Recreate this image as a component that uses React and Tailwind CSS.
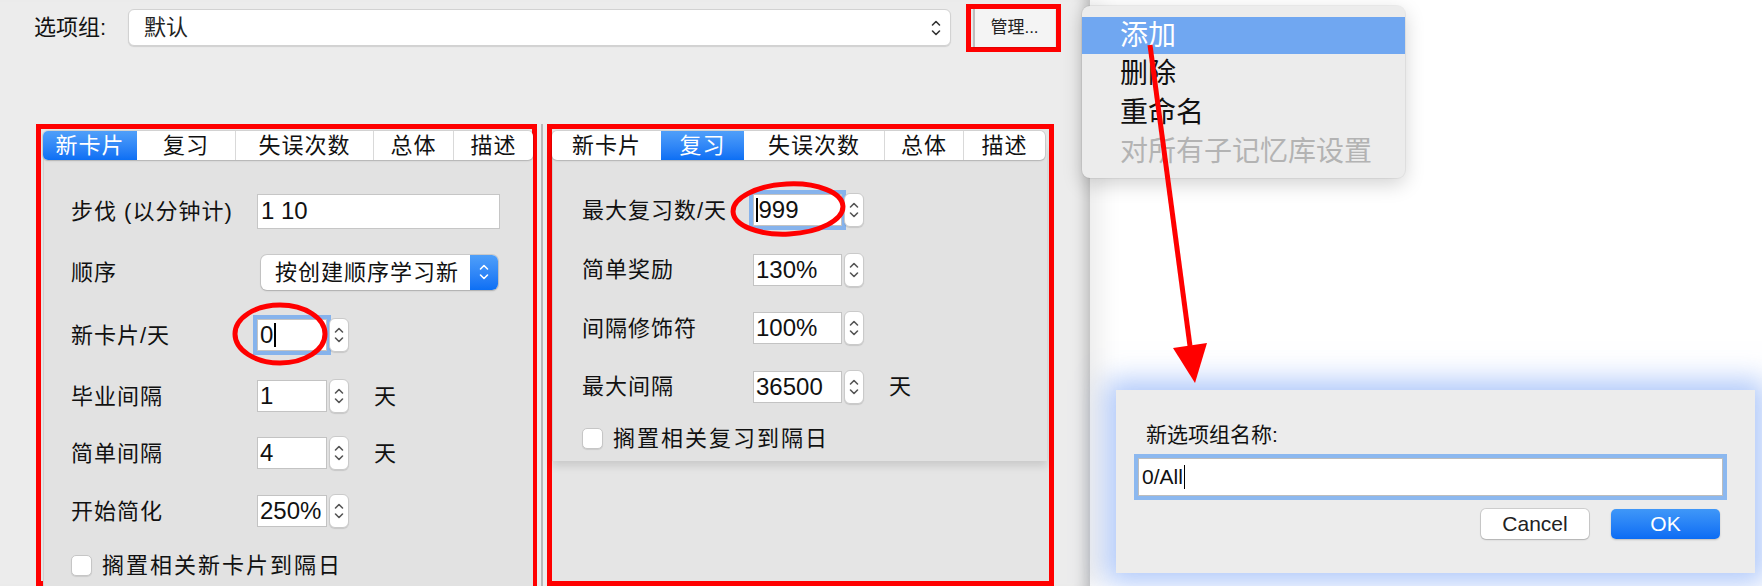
import React from "react";

const FONT = "font-['Liberation_Sans','Noto_Sans_CJK_SC',sans-serif]";

function UpDown({ color = "#4a4a4a", h = 24 }) {
  return (
    <svg width="12" height={h} viewBox="0 0 12 24" fill="none" stroke={color} strokeWidth="1.6" strokeLinecap="round" strokeLinejoin="round">
      <path d="M2.5 9 L6 5.5 L9.5 9" />
      <path d="M2.5 15 L6 18.5 L9.5 15" />
    </svg>
  );
}

function Stepper() {
  return (
    <div className="ml-[2px] flex h-[34px] w-[20px] items-center justify-center rounded-[6px] border border-[#cacaca] bg-white shadow-[0_1px_1px_rgba(0,0,0,0.12)]">
      <UpDown color="#555" />
    </div>
  );
}

function NumField({ value, w = "w-[70px]", focused, caretFirst, unit }) {
  return (
    <div className="flex items-center">
      <div
        className={`flex h-[32px] ${w} items-center border border-[#c3c3c3] bg-white pl-[2px] text-[24px] leading-none text-[#111] ${
          focused ? "shadow-[0_0_0_4px_#86b3ec]" : ""
        }`}
      >
        {caretFirst && <span className="mr-[1px] inline-block h-[24px] w-[1.5px] bg-black" />}
        <span>{value}</span>
        {focused && !caretFirst && <span className="ml-[1px] inline-block h-[24px] w-[1.5px] bg-black" />}
      </div>
      <Stepper />
      {unit && <span className="ml-[25px] text-[22px] text-[#111]">{unit}</span>}
    </div>
  );
}

function Checkbox({ label }) {
  return (
    <div className="flex items-center gap-[10px]">
      <div className="h-[21px] w-[21px] rounded-[5px] border border-[#c6c6c6] bg-white shadow-[0_1px_1px_rgba(0,0,0,0.1)]" />
      <span className="text-[22px] tracking-[2px] text-[#111]">{label}</span>
    </div>
  );
}

function TabBar({ tabs, active, widths }) {
  return (
    <div className="relative z-10 flex h-[29px] overflow-hidden rounded-[5px] bg-white shadow-[0_0_0_1px_rgba(0,0,0,0.08),0_1px_2px_rgba(0,0,0,0.15)]">
      {tabs.map((t, i) => (
        <div
          key={t}
          className={`flex items-center justify-center text-[22px] leading-none tracking-[1px] ${widths[i]} ${
            i === active
              ? "bg-gradient-to-b from-[#4f9ff9] to-[#0b6ff4] text-white"
              : "text-[#111]"
          } ${i > 0 && i !== active && i - 1 !== active ? "border-l border-[#d9d9d9]" : ""}`}
        >
          {t}
        </div>
      ))}
    </div>
  );
}

const TABS = ["新卡片", "复习", "失误次数", "总体", "描述"];

function Row({ h, label, lw, children }) {
  return (
    <div className={`flex items-center ${h}`}>
      <span className={`${lw} shrink-0 whitespace-nowrap text-[22px] tracking-[1px] text-[#111]`}>{label}</span>
      {children}
    </div>
  );
}

export default function App() {
  return (
    <div className={`relative flex h-[586px] w-[1762px] overflow-hidden bg-white ${FONT}`}>
      {/* main window */}
      <div className="relative flex h-full w-[1090px] shrink-0 flex-col bg-[#ececec] shadow-[inset_-16px_0_14px_-12px_rgba(0,0,0,0.22),10px_0_22px_rgba(0,0,0,0.08)]">
        {/* top row */}
        <div className="flex h-[55px] items-center pl-[34px]">
          <span className="w-[94px] text-[22px] text-[#111]">选项组:</span>
          <div className="flex h-[37px] w-[823px] items-center justify-between rounded-[6px] border border-[#d2d2d2] bg-white pl-[15px] pr-[8px] shadow-[0_1px_1px_rgba(0,0,0,0.12)]">
            <span className="text-[22px] text-[#222]">默认</span>
            <UpDown color="#333" h={26} />
          </div>
          <div className="ml-[15px] flex h-[48px] w-[95px] items-center justify-center border-[5px] border-[#ff0000]">
            <div className="flex h-[38px] w-[82px] items-center justify-center border-l-2 border-[#bdbdbd] bg-[#f4f4f4] text-[17px] text-[#222] shadow-[0_1px_1px_rgba(0,0,0,0.1)]">
              管理...
            </div>
          </div>
        </div>

        {/* panels */}
        <div className="mt-[69px] flex pl-[36px]">
          {/* left panel */}
          <div className="h-[462px] w-[501px] border-[5px] border-[#ff0000] bg-[#e6e6e6] pl-[2px] pt-[2px]">
            <div className="w-[490px]">
              <TabBar tabs={TABS} active={0} widths={["w-[94px]", "w-[98px]", "w-[138px]", "w-[80px]", "w-[80px]"]} />
              <div className="-mt-[15px] h-[460px] border-l border-[#d0d0d0] bg-[#e2e2e2] pl-[27px] pt-[36px]">
                <Row h="h-[60px]" label="步伐 (以分钟计)" lw="w-[186px]">
                  <div className="flex h-[35px] w-[243px] items-center border border-[#c6c6c6] bg-white pl-[3px] text-[24px] text-[#111]">
                    1 10
                  </div>
                </Row>
                <Row h="h-[62px]" label="顺序" lw="w-[190px]">
                  <div className="flex h-[35px] w-[237px] items-center overflow-hidden rounded-[6px] bg-white shadow-[0_0_0_1px_rgba(0,0,0,0.1),0_1px_2px_rgba(0,0,0,0.15)]">
                    <span className="flex-1 overflow-hidden whitespace-nowrap pl-[14px] text-[22px] tracking-[1px] text-[#111]">按创建顺序学习新</span>
                    <div className="flex h-full w-[28px] shrink-0 items-center justify-center bg-gradient-to-b from-[#4f9ff9] to-[#0b6ff4]">
                      <UpDown color="#fff" />
                    </div>
                  </div>
                </Row>
                <Row h="h-[64px]" label="新卡片/天" lw="w-[186px]">
                  <NumField value="0" focused />
                </Row>
                <Row h="h-[58px]" label="毕业间隔" lw="w-[186px]">
                  <NumField value="1" unit="天" />
                </Row>
                <Row h="h-[56px]" label="简单间隔" lw="w-[186px]">
                  <NumField value="4" unit="天" />
                </Row>
                <Row h="h-[60px]" label="开始简化" lw="w-[186px]">
                  <NumField value="250%" />
                </Row>
                <div className="flex h-[48px] items-center">
                  <Checkbox label="搁置相关新卡片到隔日" />
                </div>
              </div>
            </div>
          </div>

          {/* splitter */}
          <div className="flex w-[10px] justify-center">
            <div className="h-[462px] w-[2px] bg-[#b8b8b8]" />
          </div>

          {/* right panel */}
          <div className="h-[462px] w-[507px] border-[5px] border-[#ff0000] bg-[#e5e5e5] pt-[2px]">
            <div className="w-[493px]">
              <TabBar tabs={TABS} active={1} widths={["w-[109px]", "w-[83px]", "w-[140px]", "w-[79px]", "w-[82px]"]} />
              <div className="-mt-[15px] h-[316px] w-[495px] border-l border-[#d0d0d0] bg-[#e2e2e2] pl-[29px] pt-[35px] shadow-[0_5px_8px_rgba(0,0,0,0.12)]">
                <Row h="h-[60px]" label="最大复习数/天" lw="w-[171px]">
                  <NumField value="999" w="w-[89px]" focused caretFirst />
                </Row>
                <Row h="h-[59px]" label="简单奖励" lw="w-[171px]">
                  <NumField value="130%" w="w-[89px]" />
                </Row>
                <Row h="h-[58px]" label="间隔修饰符" lw="w-[171px]">
                  <NumField value="100%" w="w-[89px]" />
                </Row>
                <Row h="h-[59px]" label="最大间隔" lw="w-[171px]">
                  <NumField value="36500" w="w-[89px]" unit="天" />
                </Row>
                <div className="flex h-[45px] items-center">
                  <Checkbox label="搁置相关复习到隔日" />
                </div>
              </div>
            </div>
          </div>
        </div>
      </div>

      {/* popup menu */}
      <div className="absolute left-[1082px] top-[6px] w-[323px] rounded-[8px] bg-[#ececec] pb-[7px] pt-[11px] shadow-[0_6px_20px_rgba(0,0,0,0.18),0_0_0_1px_rgba(0,0,0,0.05)]">
        <div className="flex h-[37px] items-center bg-[#70a7f1] pl-[38px] text-[28px] text-white">添加</div>
        <div className="flex h-[39px] items-center pl-[38px] text-[28px] text-[#111]">删除</div>
        <div className="flex h-[39px] items-center pl-[38px] text-[28px] text-[#111]">重命名</div>
        <div className="flex h-[39px] items-center pl-[38px] text-[28px] text-[#b3b3b3]">对所有子记忆库设置</div>
      </div>

      {/* dialog */}
      <div className="absolute left-[1116px] top-[390px] h-[183px] w-[639px] bg-[#ececec] px-[22px] shadow-[0_0_26px_10px_rgba(110,155,245,0.55)]">
        <div className="flex h-[68px] items-center pl-[8px] pt-[22px] text-[21px] text-[#111]">新选项组名称:</div>
        <div className="flex h-[38px] w-[585px] items-center border border-[#bdbdbd] bg-white pl-[3px] text-[21px] text-[#111] shadow-[0_0_0_4px_#8cb8ef]">
          0/All
          <span className="ml-[1px] inline-block h-[24px] w-[1.5px] bg-black" />
        </div>
        <div className="mt-[13px] flex justify-end gap-[22px] pr-[13px]">
          <div className="flex h-[30px] w-[108px] items-center justify-center rounded-[5px] bg-white text-[21px] text-[#222] shadow-[0_0_0_1px_rgba(0,0,0,0.12),0_1px_2px_rgba(0,0,0,0.15)]">
            Cancel
          </div>
          <div className="flex h-[30px] w-[109px] items-center justify-center rounded-[5px] bg-gradient-to-b from-[#3f97f8] to-[#0a6cf4] text-[21px] text-white shadow-[0_1px_2px_rgba(0,0,0,0.2)]">
            OK
          </div>
        </div>
      </div>

      {/* annotations */}
      <svg className="pointer-events-none absolute left-0 top-0" width="1762" height="586" viewBox="0 0 1762 586" fill="none">
        <ellipse cx="280" cy="334" rx="45" ry="29" stroke="#ff0000" strokeWidth="5" />
        <ellipse cx="788" cy="209" rx="55" ry="25" stroke="#ff0000" strokeWidth="5" transform="rotate(-3 788 209)" />
        <line x1="1150" y1="45" x2="1190" y2="346" stroke="#ff0000" strokeWidth="5" />
        <polygon points="1195,383 1207,343 1173,348" fill="#ff0000" />
      </svg>
    </div>
  );
}
